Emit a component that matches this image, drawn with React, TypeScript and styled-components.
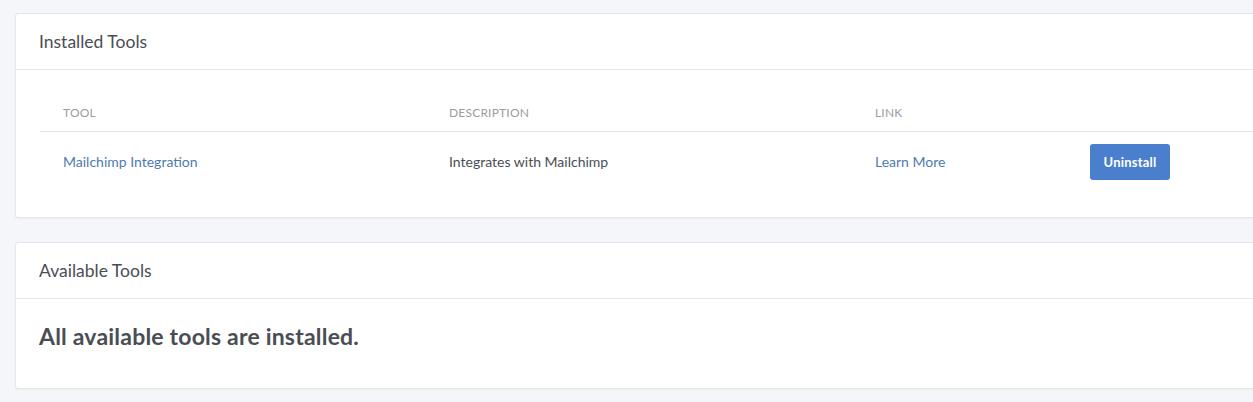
import React from "react";
import styled, { createGlobalStyle } from "styled-components";

const GlobalStyle = createGlobalStyle`
  html, body {
    margin: 0;
    padding: 0;
    background: #f4f6f9;
    overflow: hidden;
  }

  body {
    font-family: "Lato", "Open Sans", "Liberation Sans", sans-serif;
    color: #4a4e54;
  }
`;

const Page = styled.div`
  width: 1300px;
  padding: 13px 0px 14px 15px;

  display: flex;
  flex-direction: column;
  gap: 24px;
`;

const Card = styled.section`
  background: #ffffff;
  border: 1px solid #e3e6ea;
  border-radius: 3px;
  box-shadow: 0px 1px 2px rgba(0, 0, 0, 0.04);
`;

const CardHeader = styled.div`
  height: 55px;
  padding: 0px 23px;

  display: flex;
  align-items: center;

  border-bottom: 1px solid #e3e6ea;

  font-size: 17.5px;
  font-weight: 400;
  color: #4a4e54;
`;

const CardBody = styled.div<{ $bottom: number }>`
  padding: 24px 24px ${({ $bottom }) => $bottom}px 23px;
`;

const Table = styled.table`
  width: 100%;
  margin-left: 1px;
  border-collapse: collapse;
`;

const HeadCell = styled.th<{ $width?: number }>`
  width: ${({ $width }) => ($width ? `${$width}px` : "auto")};
  height: 37px;
  padding: 0px 23px;
  box-sizing: border-box;

  text-align: left;
  vertical-align: middle;

  font-size: 12px;
  font-weight: 400;
  letter-spacing: 0.2px;
  text-transform: uppercase;
  color: #9a9da1;

  border-bottom: 1px solid #e3e6ea;
`;

const Cell = styled.td`
  height: 60px;
  padding: 0px 23px;

  vertical-align: middle;
  font-size: 14px;
  color: #4a4e54;
`;

const Link = styled.a`
  color: #4f7bb0;
  text-decoration: none;
  cursor: pointer;
`;

const UninstallButton = styled.button`
  width: 80px;
  height: 36px;

  border: none;
  border-radius: 3px;
  background: #4a7fcd;

  font-family: "Lato", "Open Sans", sans-serif;
  font-size: 13px;
  font-weight: 700;
  letter-spacing: 0.2px;
  color: #ffffff;

  cursor: pointer;
`;

const EmptyMessage = styled.h3`
  margin: 0px;
  font-size: 23px;
  line-height: 26px;
  font-weight: 700;
  letter-spacing: 0.2px;
  color: #4a4e54;
`;

const App = () => {
  return (
    <>
      <GlobalStyle />
      <Page>
        <Card>
          <CardHeader>Installed Tools</CardHeader>
          <CardBody $bottom={25}>
            <Table>
              <thead>
                <tr>
                  <HeadCell $width={386}>Tool</HeadCell>
                  <HeadCell $width={426}>Description</HeadCell>
                  <HeadCell $width={215}>Link</HeadCell>
                  <HeadCell />
                </tr>
              </thead>
              <tbody>
                <tr>
                  <Cell>
                    <Link>Mailchimp Integration</Link>
                  </Cell>
                  <Cell>Integrates with Mailchimp</Cell>
                  <Cell>
                    <Link>Learn More</Link>
                  </Cell>
                  <Cell>
                    <UninstallButton>Uninstall</UninstallButton>
                  </Cell>
                </tr>
              </tbody>
            </Table>
          </CardBody>
        </Card>

        <Card>
          <CardHeader>Available Tools</CardHeader>
          <CardBody $bottom={39}>
            <EmptyMessage>All available tools are installed.</EmptyMessage>
          </CardBody>
        </Card>
      </Page>
    </>
  );
};

export default App;
